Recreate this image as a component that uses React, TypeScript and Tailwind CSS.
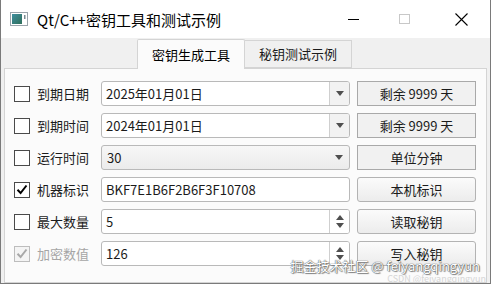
import React from 'react';

const font = "font-['Segoe_UI','Noto_Sans_CJK_SC',sans-serif]";

const Check = ({ checked = false, disabled = false }: { checked?: boolean; disabled?: boolean }) => (
  <div
    className={`w-4 h-4 shrink-0 border flex items-center justify-center ${
      disabled ? 'border-[#bdbdbd] bg-[#f4f4f4]' : 'border-[#4a4a4a] bg-white'
    }`}
  >
    {checked && (
      <svg width="12" height="11" viewBox="0 0 12 11">
        <path
          d="M1.5 5.8 L4.6 9 L10.5 1.5"
          fill="none"
          stroke={disabled ? '#a8a8a8' : '#000'}
          strokeWidth="2"
        />
      </svg>
    )}
  </div>
);

const Arrow = () => (
  <svg width="8" height="5" viewBox="0 0 8 5">
    <path d="M0 0 H8 L4 5 Z" fill="#4f4f4f" />
  </svg>
);

const SpinArrows = () => (
  <div className="flex flex-col items-center gap-[3px]">
    <svg width="8" height="5" viewBox="0 0 8 5">
      <path d="M0 5 H8 L4 0 Z" fill="#4f4f4f" />
    </svg>
    <svg width="8" height="5" viewBox="0 0 8 5">
      <path d="M0 0 H8 L4 5 Z" fill="#4f4f4f" />
    </svg>
  </div>
);

type Kind = 'date' | 'combo' | 'line' | 'spin';

const Field = ({ kind, value }: { kind: Kind; value: string }) => {
  if (kind === 'combo') {
    return (
      <div className="w-[249px] h-full rounded-[3px] border border-[#b9b9b9] bg-gradient-to-b from-[#f7f7f7] to-[#ebebeb] flex items-center pl-[5px] pr-[6px]">
        <span className="flex-1">{value}</span>
        <Arrow />
      </div>
    );
  }
  return (
    <div className="w-[249px] h-full rounded-[3px] border border-[#b9b9b9] bg-white flex items-stretch overflow-hidden">
      <span className="flex-1 flex items-center pl-[4px]">{value}</span>
      {kind === 'date' && (
        <div className="w-[20px] border-l border-[#cfcfcf] bg-[#f2f2f2] flex items-center justify-center">
          <Arrow />
        </div>
      )}
      {kind === 'spin' && (
        <div className="w-[20px] border-l border-[#cfcfcf] bg-white flex items-center justify-center">
          <SpinArrows />
        </div>
      )}
    </div>
  );
};

const Btn = ({ text, flat }: { text: string; flat?: boolean }) => (
  <div
    className={`w-[119px] h-full ml-[7px] flex items-center justify-center border ${
      flat
        ? 'border-[#a9a9a9] bg-[#f1f1f1]'
        : 'rounded-[3px] border-[#b3b3b3] bg-gradient-to-b from-[#fbfbfb] to-[#ececec]'
    }`}
  >
    {text}
  </div>
);

const rows: { label: string; kind: Kind; value: string; btn: string; flat?: boolean; checked?: boolean; disabled?: boolean }[] = [
  { label: '到期日期', kind: 'date', value: '2025年01月01日', btn: '剩余 9999 天', flat: true },
  { label: '到期时间', kind: 'date', value: '2024年01月01日', btn: '剩余 9999 天', flat: true },
  { label: '运行时间', kind: 'combo', value: '30', btn: '单位分钟', flat: true },
  { label: '机器标识', kind: 'line', value: 'BKF7E1B6F2B6F3F10708', btn: '本机标识', checked: true },
  { label: '最大数量', kind: 'spin', value: '5', btn: '读取秘钥' },
  { label: '加密数值', kind: 'spin', value: '126', btn: '写入秘钥', checked: true, disabled: true },
];

export default function App() {
  return (
    <div className={`${font} relative w-[491px] h-[284px] overflow-hidden bg-[#f0f0f0] border-x border-b border-[#7a7a7a] flex flex-col text-[13px] text-[#1b1b1b]`}>
      {/* title bar */}
      <div className="h-[38px] bg-white flex items-center shrink-0">
        <svg className="ml-[9px]" width="18" height="14" viewBox="0 0 18 14">
          <rect x="0.5" y="0.5" width="17" height="13" fill="#fff" stroke="#9aa4ab" />
          <defs>
            <linearGradient id="ic" x1="0" y1="0" x2="1" y2="1">
              <stop offset="0" stopColor="#3f8fa0" />
              <stop offset="1" stopColor="#2f6f5a" />
            </linearGradient>
          </defs>
          <rect x="2" y="2" width="10" height="10" fill="url(#ic)" />
          <rect x="14" y="3" width="1.5" height="4" fill="#7a8a90" />
        </svg>
        <span className="ml-[9px] text-[15px] text-black leading-none">Qt/C++密钥工具和测试示例</span>
        <div className="ml-auto flex items-center h-full">
          <div className="w-[46px] h-full flex items-center justify-center">
            <div className="w-[11px] h-px bg-black" />
          </div>
          <div className="w-[56px] h-full flex items-center justify-center">
            <div className="w-[11px] h-[10px] border border-[#c8c8c8]" />
          </div>
          <div className="w-[58px] h-full flex items-center justify-center">
            <svg width="13" height="13" viewBox="0 0 13 13">
              <path d="M0.5 0.5 L12.5 12.5 M12.5 0.5 L0.5 12.5" stroke="#000" strokeWidth="1.1" />
            </svg>
          </div>
        </div>
      </div>

      {/* tabs */}
      <div className="h-[30px] shrink-0 flex items-end pl-[136px] relative z-10">
        <div className="w-[108px] h-[30px] -mb-px bg-[#fbfbfb] border border-b-0 border-[#d4d4d4] rounded-t-[2px] flex items-center justify-center text-black">
          密钥生成工具
        </div>
        <div className="w-[107px] h-[28px] bg-[#f0f0f0] border border-l-0 border-[#d4d4d4] flex items-center justify-center">
          秘钥测试示例
        </div>
      </div>

      {/* panel */}
      <div className="flex-1 mx-[3px] border border-[#d4d4d4] bg-[#fbfbfb] pt-[12px] pl-[9px] flex flex-col gap-[7px]">
        {rows.map((r) => (
          <div key={r.label} className="h-[25px] flex items-center">
            <Check checked={r.checked} disabled={r.disabled} />
            <span className={`ml-[7px] w-[64px] ${r.disabled ? 'text-[#a5a5a5]' : ''}`}>{r.label}</span>
            <Field kind={r.kind} value={r.value} />
            <Btn text={r.btn} flat={r.flat} />
          </div>
        ))}
      </div>

      {/* watermark */}
      <div className="absolute right-[10px] bottom-[11px] text-[13px] text-white leading-none [text-shadow:0_0_1px_#555,0_0_1px_#555,1px_1px_1px_#888]">
        掘金技术社区 @ feiyangqingyun
      </div>
      <div className="absolute right-[4px] bottom-0 text-[9px] text-[#d6d6d6] leading-none">
        CSDN @feiyangqingyun
      </div>
    </div>
  );
}
